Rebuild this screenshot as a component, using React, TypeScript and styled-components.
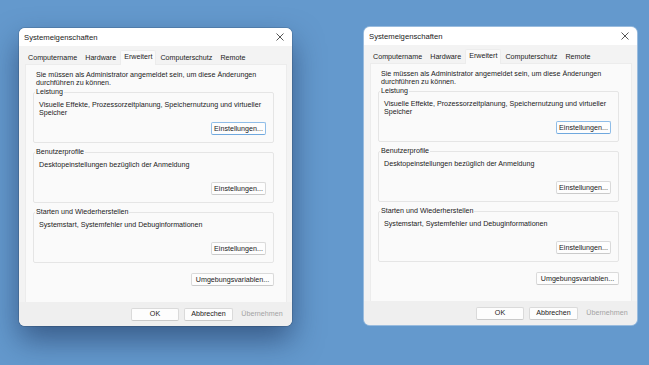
import React from 'react';
import styled, { createGlobalStyle } from 'styled-components';

const GlobalStyle = createGlobalStyle`
    html, body {
        margin: 0;
        padding: 0;
    }
    body {
        width: 649px;
        height: 365px;
        overflow: hidden;
        background: #6499cd;
        font-family: 'Liberation Sans', Arial, sans-serif;
        color: #1b1b1b;
    }
`;

const Desktop = styled.div`
    display: flex;
    align-items: flex-start;
    gap: 72px;
    padding: 27px 0 0 19px;
`;

const Window = styled.div<{ $shadow?: boolean; $offset?: number }>`
    width: 273px;
    height: 298px;
    margin-top: ${props => props.$offset || 0}px;
    display: flex;
    flex-direction: column;
    border-radius: 6px;
    overflow: hidden;
    background: #f3f3f3;
    box-shadow: ${props =>
        props.$shadow
            ? '0 0 0 1px rgba(0, 0, 0, 0.12), 0 14px 30px rgba(20, 40, 80, 0.55)'
            : '0 0 0 1px rgba(255, 255, 255, 0.35)'};
`;

const TitleBar = styled.div`
    height: 18px;
    flex-shrink: 0;
    display: flex;
    align-items: center;
    justify-content: space-between;
    padding: 0 8px 0 5px;
    background: #ffffff;
    font-size: 7.7px;
    color: #1a1a1a;
`;

const CloseButton = styled.div`
    display: flex;
    align-items: center;
    color: #2b2b2b;
`;

const TabStrip = styled.div`
    height: 18px;
    flex-shrink: 0;
    display: flex;
    align-items: flex-end;
    padding-left: 5px;
`;

const Tab = styled.div<{ $active?: boolean }>`
    position: relative;
    z-index: ${props => (props.$active ? 1 : 0)};
    padding: 0 ${props => (props.$active ? 3 : 4)}px;
    height: ${props => (props.$active ? 14 : 12)}px;
    line-height: 12px;
    margin-bottom: ${props => (props.$active ? -1 : 0)}px;
    font-size: 7.15px;
    white-space: nowrap;
    background: ${props => (props.$active ? '#fafafa' : 'transparent')};
    border: ${props => (props.$active ? '1px solid #ececec' : 'none')};
    border-bottom: none;
    border-radius: 2px 2px 0 0;
`;

const Panel = styled.div`
    flex: 1;
    display: flex;
    flex-direction: column;
    margin: 0 5px 0 6px;
    padding: 6px 12px 0 7px;
    background: #fafafa;
    border: 1px solid #ececec;
    border-bottom: none;
`;

const Intro = styled.div`
    margin-left: 3px;
    font-size: 7.15px;
    line-height: 8px;
    white-space: nowrap;
`;

const Group = styled.fieldset<{ $gap: number }>`
    margin: ${props => props.$gap}px 0 0 0;
    padding: 5px 7px 7px 1px;
    min-width: 0;
    border: 1px solid #e5e5e5;
    border-radius: 2px;
`;

const Legend = styled.legend`
    padding: 0 1px;
    font-size: 7.15px;
    line-height: 8px;
`;

const GroupBody = styled.div`
    height: 34px;
    display: flex;
    flex-direction: column;
`;

const Description = styled.div`
    margin-left: 4px;
    font-size: 7.15px;
    line-height: 8px;
    white-space: nowrap;
`;

const Button = styled.div<{ $w: number; $focus?: boolean; $disabled?: boolean; $flat?: boolean }>`
    width: ${props => props.$w}px;
    height: 13px;
    box-sizing: border-box;
    display: flex;
    align-items: center;
    justify-content: center;
    font-size: 7.15px;
    white-space: nowrap;
    color: ${props => (props.$disabled ? '#a3a3a3' : '#1b1b1b')};
    background: ${props => (props.$flat ? 'transparent' : '#fdfdfd')};
    border: 1px solid
        ${props => (props.$flat ? 'transparent' : props.$focus ? '#8fbde8' : '#dadada')};
    border-bottom-color: ${props =>
        props.$flat ? 'transparent' : props.$focus ? '#6fa8de' : '#cacaca'};
    border-radius: 2px;
`;

const GroupButton = styled(Button)`
    margin-top: auto;
    align-self: flex-end;
`;

const EnvButton = styled(Button)`
    margin-top: 10px;
    align-self: flex-end;
`;

const Footer = styled.div`
    height: 24px;
    flex-shrink: 0;
    display: flex;
    align-items: center;
    justify-content: flex-end;
    gap: 5px;
    padding-right: 6px;
    background: #efefef;
`;

const tabs = ['Computername', 'Hardware', 'Erweitert', 'Computerschutz', 'Remote'];

const groups = [
    {
        title: 'Leistung',
        lines: ['Visuelle Effekte, Prozessorzeitplanung, Speichernutzung und virtueller', 'Speicher'],
        gap: 1,
        focus: true,
    },
    {
        title: 'Benutzerprofile',
        lines: ['Desktopeinstellungen bezüglich der Anmeldung'],
        gap: 5,
    },
    {
        title: 'Starten und Wiederherstellen',
        lines: ['Systemstart, Systemfehler und Debuginformationen'],
        gap: 5,
    },
];

const CloseIcon = () => (
    <svg width="8" height="8" viewBox="0 0 8 8">
        <path d="M0.5 0.5 L7.5 7.5 M7.5 0.5 L0.5 7.5" stroke="currentColor" strokeWidth="0.8" fill="none" />
    </svg>
);

const SystemProperties = ({ shadow, offset }: { shadow?: boolean; offset?: number }) => (
    <Window $shadow={shadow} $offset={offset}>
        <TitleBar>
            <span>Systemeigenschaften</span>
            <CloseButton>
                <CloseIcon />
            </CloseButton>
        </TitleBar>
        <TabStrip>
            {tabs.map(tab => (
                <Tab key={tab} $active={tab === 'Erweitert'}>
                    {tab}
                </Tab>
            ))}
        </TabStrip>
        <Panel>
            <Intro>
                Sie müssen als Administrator angemeldet sein, um diese Änderungen
                <br />
                durchführen zu können.
            </Intro>
            {groups.map(group => (
                <Group key={group.title} $gap={group.gap}>
                    <Legend>{group.title}</Legend>
                    <GroupBody>
                        {group.lines.map(line => (
                            <Description key={line}>{line}</Description>
                        ))}
                        <GroupButton $w={55} $focus={group.focus}>
                            Einstellungen...
                        </GroupButton>
                    </GroupBody>
                </Group>
            ))}
            <EnvButton $w={83}>Umgebungsvariablen...</EnvButton>
        </Panel>
        <Footer>
            <Button $w={48}>OK</Button>
            <Button $w={49}>Abbrechen</Button>
            <Button $w={48} $flat $disabled>
                Übernehmen
            </Button>
        </Footer>
    </Window>
);

const App = () => (
    <>
        <GlobalStyle />
        <Desktop>
            <SystemProperties shadow offset={1} />
            <SystemProperties />
        </Desktop>
    </>
);

export default App;
